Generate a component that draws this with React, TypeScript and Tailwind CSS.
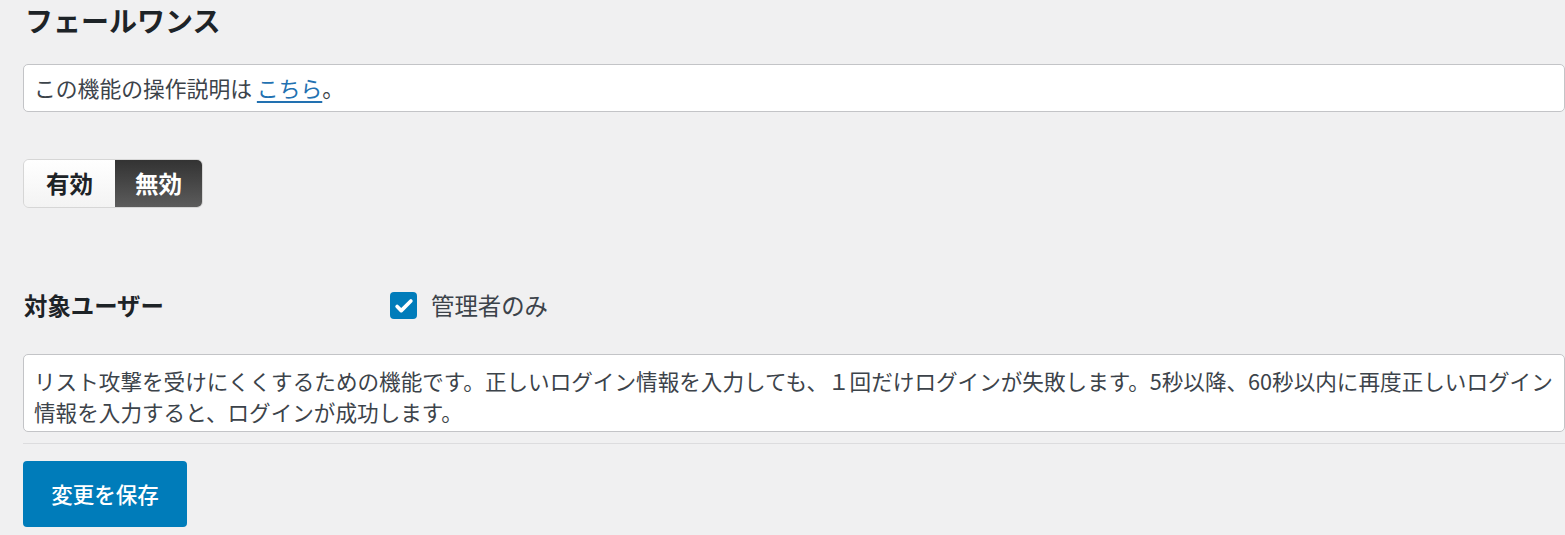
export default function App() {
  return (
    <div
      className="min-h-screen bg-[#f0f0f1] pl-[23px] text-[#3c434a]"
      style={{ fontFamily: '"Noto Sans CJK JP", "Noto Sans", sans-serif' }}
    >
      {/* Title */}
      <h1 className="pl-[2px] pt-[2px] text-[28px] font-bold leading-[36px] text-[#1d2327]">フェールワンス</h1>

      {/* Help link */}
      <div className="mt-[26px] flex h-[48px] items-center rounded-[5px] border border-[#c3c4c7] bg-white px-[10px] text-[21.8px]">
        この機能の操作説明は&nbsp;
        <a href="#" className="text-[#2271b1] underline underline-offset-4">
          こちら
        </a>
        。
      </div>

      {/* Toggle */}
      <div className="mt-[47px] flex h-[49px] w-[180px] overflow-hidden rounded-[6px] border border-[#d6d6d6] text-[23.5px] font-bold">
        <button className="flex w-[91px] items-center justify-center bg-gradient-to-b from-white to-[#f3f3f3] text-[#1d2327]">
          有効
        </button>
        <button className="flex flex-1 items-center justify-center bg-gradient-to-b from-[#333333] to-[#5c5c5c] text-white">
          無効
        </button>
      </div>

      {/* Target users */}
      <div className="mt-[84px] flex h-[27px] items-center">
        <div className="w-[367px] pl-px text-[23.4px] font-bold text-[#1d2327]">対象ユーザー</div>
        <label className="flex items-center gap-[14px] text-[23.4px]">
          <span className="flex h-[27px] w-[27px] items-center justify-center rounded-[4px] bg-[#007cba]">
            <svg viewBox="0 0 24 24" className="h-[22px] w-[22px]" fill="none" stroke="white" strokeWidth="4" strokeLinecap="round" strokeLinejoin="round">
              <path d="M4.5 12.5l4.5 4.5L19.5 6.5" />
            </svg>
          </span>
          管理者のみ
        </label>
      </div>

      {/* Description */}
      <div className="mt-[35px] rounded-[5px] border border-[#c3c4c7] bg-white pb-[4px] pl-[10px] pr-[6px] pt-[10px] text-[21.6px] leading-[31px]">
        リスト攻撃を受けにくくするための機能です。正しいログイン情報を入力しても、１回だけログインが失敗します。5秒以降、60秒以内に再度正しいログイン情報を入力すると、ログインが成功します。
      </div>

      <hr className="mt-[11px] border-t border-[#dcdcde]" />

      {/* Save */}
      <button className="mt-[17px] h-[66px] w-[164px] rounded-[4px] bg-[#007cba] text-[21.5px] font-medium text-white">
        変更を保存
      </button>
    </div>
  );
}
